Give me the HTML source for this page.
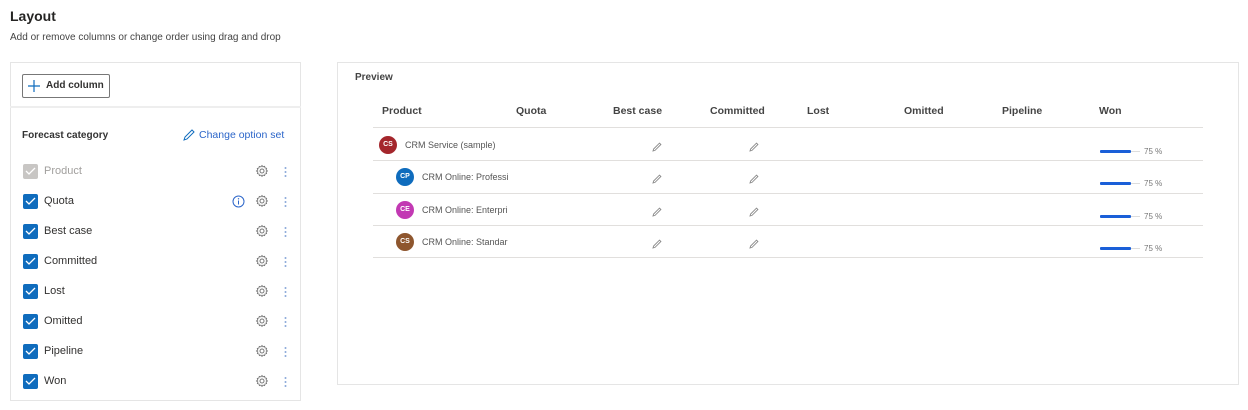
<!DOCTYPE html>
<html><head><style>
*{box-sizing:border-box;margin:0;padding:0}
body{width:1248px;height:410px;background:#fff;font-family:"Liberation Sans",sans-serif;color:#323130;position:relative;overflow:hidden}
.a{position:absolute;white-space:nowrap}
.cb{position:absolute;left:23px;width:15px;height:15px;background:#0f6cbd;border-radius:2px}
.cb svg{position:absolute;left:2px;top:3px}
.lbl{position:absolute;left:44px;font-size:11px;color:#323130}
.hl{position:absolute;left:373px;width:830px;height:1px;background:#e1dfdd}
.th{position:absolute;top:105px;font-size:10.5px;font-weight:bold;color:#444}
.av{position:absolute;width:18px;height:18px;border-radius:50%;color:#fff;font-size:7px;font-weight:bold;text-align:center;line-height:18px}
.pt{position:absolute;font-size:9px;color:#555}
.bar{position:absolute;left:1100px;width:31px;height:3px;background:#1a5fd8;border-radius:1px}
.bg{position:absolute;left:1131px;width:9px;height:1px;background:#ddd}
.pc{position:absolute;left:1144px;font-size:8px;color:#777}
</style></head><body>
<div class="a" style="left:10px;top:8px;font-size:14px;font-weight:bold;color:#252423">Layout</div>
<div class="a" style="left:10px;top:32px;font-size:10px;color:#444">Add or remove columns or change order using drag and drop</div>

<div class="a" style="left:10px;top:62px;width:291px;height:339px;border:1px solid #e5e5e5"></div>
<div class="a" style="left:10px;top:106px;width:291px;height:2px;background:#eee"></div>
<div class="a" style="left:22px;top:74px;width:88px;height:24px;border:1px solid #777;border-radius:2px;font-size:10px;font-weight:bold;line-height:22px;padding-left:23px">Add column</div>
<svg class="a" style="left:28px;top:80px" width="12" height="12"><path d="M6 0v12M0 6h12" stroke="#0f6cbd" stroke-width="1.2"/></svg>
<div class="a" style="left:22px;top:130px;font-size:10px;font-weight:bold;color:#333">Forecast category</div>
<svg class="a" style="left:183px;top:129px" width="12" height="12"><path d="M1 11l1-3 7-7 2 2-7 7z" fill="none" stroke="#0f6cbd" stroke-width="1"/></svg>
<div class="a" style="left:199px;top:129px;font-size:10.5px;color:#2b65c9">Change option set</div>

<div class="cb" style="top:164px;background:#c8c6c4"><svg width="11" height="9"><path d="M1 4l3 3 6-6" fill="none" stroke="#fff" stroke-width="1.3"/></svg></div>
<div class="lbl" style="top:165px;color:#a19f9d">Product</div>
<div id="rows"></div>
<svg class="a" style="left:232px;top:195px" width="13" height="13"><circle cx="6.5" cy="6.5" r="5.5" fill="none" stroke="#2b65c9"/><path d="M6.5 5.5v4" stroke="#2b65c9"/><circle cx="6.5" cy="3.8" r=".7" fill="#2b65c9"/></svg>

<div class="a" style="left:337px;top:62px;width:902px;height:323px;border:1px solid #e5e5e5"></div>
<div class="a" style="left:355px;top:72px;font-size:10px;font-weight:bold;color:#444">Preview</div>
<div class="th" style="left:382px">Product</div>
<div class="th" style="left:516px">Quota</div>
<div class="th" style="left:613px">Best case</div>
<div class="th" style="left:710px">Committed</div>
<div class="th" style="left:807px">Lost</div>
<div class="th" style="left:904px">Omitted</div>
<div class="th" style="left:1002px">Pipeline</div>
<div class="th" style="left:1099px">Won</div>
<div class="hl" style="top:127px"></div>
<div class="hl" style="top:160px"></div>
<div class="hl" style="top:193px"></div>
<div class="hl" style="top:225px"></div>
<div class="hl" style="top:257px"></div>

<div class="av" style="left:379px;top:136px;background:#a4262c">CS</div>
<div class="pt" style="left:405px;top:140px">CRM Service (sample)</div>
<div class="av" style="left:396px;top:168px;background:#0f6cbd">CP</div>
<div class="pt" style="left:422px;top:172px">CRM Online: Professi</div>
<div class="av" style="left:396px;top:201px;background:#c239b3">CE</div>
<div class="pt" style="left:422px;top:205px">CRM Online: Enterpri</div>
<div class="av" style="left:396px;top:233px;background:#8e562e">CS</div>
<div class="pt" style="left:422px;top:237px">CRM Online: Standar</div>
<div id="pr"></div>
<script>
var h='',n=['Quota','Best case','Committed','Lost','Omitted','Pipeline','Won'];
var gear='<svg width="14" height="14" viewBox="0 0 14 14"><circle cx="7" cy="7" r="2" fill="none" stroke="#777"/><path d="M7 1.5l1 1.3 1.6-.5.4 1.6 1.6.4-.5 1.6 1.3 1.1-1.3 1 .5 1.6-1.6.4-.4 1.6-1.6-.5-1 1.3-1-1.3-1.6.5-.4-1.6-1.6-.4.5-1.6L1.5 7l1.3-1-.5-1.6 1.6-.4.4-1.6 1.6.5z" fill="none" stroke="#777" stroke-width=".9"/></svg>';
var dots='<svg width="3" height="12"><circle cx="1.5" cy="2" r="1" fill="#8aa8d8"/><circle cx="1.5" cy="6" r="1" fill="#8aa8d8"/><circle cx="1.5" cy="10" r="1" fill="#8aa8d8"/></svg>';
h+='<div class="a" style="left:255px;top:164px">'+gear+'</div><div class="a" style="left:284px;top:165px">'+dots+'</div>';
n.forEach(function(s,i){var y=194+i*30;
h+='<div class="cb" style="top:'+y+'px"><svg width="11" height="9"><path d="M1 4l3 3 6-6" fill="none" stroke="#fff" stroke-width="1.3"/></svg></div><div class="lbl" style="top:'+(y+1)+'px">'+s+'</div><div class="a" style="left:255px;top:'+y+'px">'+gear+'</div><div class="a" style="left:284px;top:'+(y+1)+'px">'+dots+'</div>';});
document.getElementById('rows').outerHTML=h;
var p='',pen='<svg width="10" height="10"><path d="M1 9l.6-2L7.5 1.1 8.9 2.5 3 8.4z" fill="none" stroke="#888" stroke-width=".9"/></svg>';
[139,171,204,236].forEach(function(y){
p+='<div class="a" style="left:652px;top:'+y+'px">'+pen+'</div><div class="a" style="left:749px;top:'+y+'px">'+pen+'</div><div class="bar" style="top:'+(y+11)+'px"></div><div class="bg" style="top:'+(y+12)+'px"></div><div class="pc" style="top:'+(y+8)+'px">75 %</div>';});
document.getElementById('pr').outerHTML=p;
</script>
</body></html>
